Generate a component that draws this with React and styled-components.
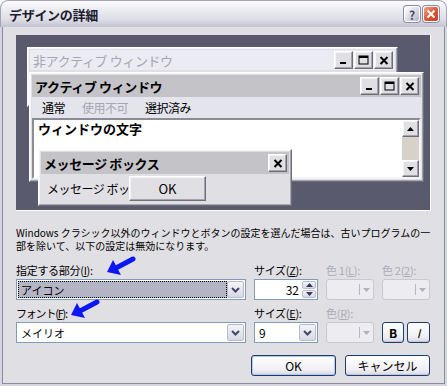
import styled, { createGlobalStyle, css } from "styled-components";

const GlobalStyle = createGlobalStyle`
  html, body {
    margin: 0;
    padding: 0;
    background: #ffffff;
  }
  body {
    font-family: "Noto Sans CJK JP", "Noto Sans", sans-serif;
  }
  * {
    box-sizing: border-box;
  }
`;

const raised = css`
  border: 1px solid;
  border-color: #ffffff #6e6e7a #6e6e7a #ffffff;
  box-shadow: inset -1px -1px #a4a4ae, inset 1px 1px #f4f4f8;
`;

const Window = styled.div`
  width: 447px;
  height: 386px;
  display: flex;
  flex-direction: column;
  background: #d6d6e0;
  border-radius: 8px 8px 0 0;
  padding: 0 2px 2px;
  overflow: hidden;
`;

const TitleBar = styled.div`
  height: 27px;
  margin: 0 -2px;
  display: flex;
  align-items: center;
  gap: 3px;
  padding: 0 7px 0 8px;
  border: 1px solid #a4a4b6;
  border-bottom: none;
  border-radius: 8px 8px 0 0;
  background: linear-gradient(#fdfdfe 0%, #ededf3 30%, #dedee8 70%, #c4c4d2 100%);
`;

const TitleText = styled.div`
  flex: 1;
  font-size: 13px;
  font-weight: 700;
  color: #1c1c2c;
  letter-spacing: -0.3px;
`;

const CapIcon = styled.div`
  width: 16px;
  height: 16px;
  border-radius: 3px;
  border: 1px solid #ffffff;
  box-shadow: 0 0 0 1px #8c8ca2;
  display: flex;
  align-items: center;
  justify-content: center;
  font-size: 12px;
  font-weight: 700;
  color: #4a4a66;
  background: ${(p) =>
    p.$close
      ? "linear-gradient(135deg, #f6a68e, #e06040 45%, #c23a1e)"
      : "linear-gradient(135deg, #ffffff, #dcdce6 50%, #b6b6c8)"};
`;

const Body = styled.div`
  flex: 1;
  background: #e0dfe3;
  border: 1px solid #8b8b9b;
  border-top: none;
  padding: 8px 13px 0;
`;

const Preview = styled.div`
  position: relative;
  height: 176px;
  background: #5a5a6e;
  border-right: 1px solid #ffffff;
  border-bottom: 1px solid #ffffff;
  overflow: hidden;
`;

const PreviewWin = styled.div`
  position: absolute;
  left: ${(p) => p.$left}px;
  top: ${(p) => p.$top}px;
  width: ${(p) => p.$width}px;
  height: ${(p) => p.$height}px;
  background: #e0dfe3;
  padding: 2px;
  display: flex;
  flex-direction: column;
  ${raised}
`;

const Caption = styled.div`
  height: ${(p) => p.$h}px;
  flex-shrink: 0;
  display: flex;
  align-items: center;
  justify-content: space-between;
  padding: 0 2px 0 3px;
  background: ${(p) => (p.$active ? "#c4c4c8" : "#ebebf3")};
  color: ${(p) => (p.$active ? "#000000" : "#a6a6ae")};
  font-size: 13px;
  font-weight: ${(p) => (p.$active ? 700 : 400)};
  letter-spacing: -0.4px;
  white-space: nowrap;
`;

const CapButtons = styled.div`
  display: flex;
  gap: 1px;
`;

const CapButton = styled.div`
  width: 19px;
  height: 18px;
  background: #e0dfe3;
  display: flex;
  align-items: center;
  justify-content: center;
  ${raised}
`;

const MenuBar = styled.div`
  height: 21px;
  flex-shrink: 0;
  display: flex;
  align-items: center;
  gap: 17px;
  padding-left: 10px;
  font-size: 12px;
  letter-spacing: -0.5px;
  background: #e4e4ec;
`;

const MenuItem = styled.span`
  color: ${(p) => (p.$disabled ? "#a6a6ae" : "#000000")};
`;

const TextBox = styled.div`
  flex: 1;
  display: flex;
  background: #ffffff;
  border: 2px solid;
  border-color: #8c8c96 #f4f4f8 #f4f4f8 #8c8c96;
`;

const WinText = styled.div`
  flex: 1;
  padding: 0 4px;
  font-size: 13px;
  font-weight: 700;
  line-height: 18px;
`;

const ScrollBar = styled.div`
  width: 17px;
  display: flex;
  flex-direction: column;
  justify-content: space-between;
  background: #d6d2ca;
`;

const ScrollButton = styled(CapButton)`
  width: 17px;
  height: 17px;
`;

const MsgBody = styled.div`
  flex: 1;
  display: flex;
  align-items: center;
  padding-left: 6px;
  font-size: 12px;
  letter-spacing: -0.5px;
`;

const MsgText = styled.span`
  width: 82px;
  overflow: hidden;
  white-space: nowrap;
`;

const MsgOk = styled(CapButton)`
  width: 77px;
  height: 25px;
  font-size: 13px;
  letter-spacing: 0;
`;

const Note = styled.p`
  margin: 15px 0 0;
  font-size: 10px;
  line-height: 13px;
  white-space: nowrap;
  color: #000000;
`;

const Form = styled.div`
  position: relative;
  margin-top: 11px;
  display: grid;
  grid-template-columns: 230px 64px 48px 48px;
  column-gap: 8px;
  row-gap: 6px;
`;

const Field = styled.div`
  display: flex;
  flex-direction: column;
  gap: 2px;
`;

const Label = styled.div`
  height: 14px;
  font-size: 11px;
  line-height: 14px;
  letter-spacing: ${(p) => (p.$tight ? "-1.2px" : "-0.3px")};
  white-space: nowrap;
  color: ${(p) => (p.$disabled ? "#acacb6" : "#000000")};
`;

const Combo = styled.div`
  height: 21px;
  display: flex;
  background: #ffffff;
  border: 1px solid #7f9db9;
  padding: 1px;
`;

const ComboText = styled.div`
  flex: 1;
  display: flex;
  align-items: center;
  justify-content: ${(p) => (p.$right ? "flex-end" : "flex-start")};
  padding: 0 3px;
  font-size: ${(p) => (p.$num ? "12px" : "11px")};
  ${(p) =>
    p.$selected &&
    css`
      background: #b4b5c4;
      outline: 1px dotted #000000;
      outline-offset: -1px;
    `}
`;

const DropButton = styled.div`
  width: 17px;
  display: flex;
  align-items: center;
  justify-content: center;
  border: 1px solid #b6bccb;
  border-radius: 2px;
  background: linear-gradient(#f4f4f8, #d8d9e4);
`;

const Spin = styled.div`
  width: 14px;
  display: flex;
  flex-direction: column;
  gap: 1px;
`;

const SpinPart = styled(DropButton)`
  width: 14px;
  flex: 1;
`;

const ColorButton = styled.div`
  height: 21px;
  display: flex;
  align-items: center;
  justify-content: flex-end;
  gap: 3px;
  padding-right: 3px;
  border: 1px solid #c8c8d2;
  border-radius: 3px;
  background: #ececf1;
`;

const Separator = styled.span`
  width: 1px;
  height: 11px;
  background: #b8b8c2;
`;

const XpButton = styled.div`
  width: ${(p) => p.$w}px;
  height: 21px;
  display: flex;
  align-items: center;
  justify-content: center;
  border: 1px solid #1c3c6c;
  border-radius: 3px;
  background: linear-gradient(#ffffff, #f0f0f4 70%, #d8d8e6);
  font-size: 12px;
  color: #000000;
  box-shadow: ${(p) =>
    p.$default ? "inset 0 0 0 1px #b6c8ec" : "inset 0 -1px 0 #c6c6d6"};
`;

const StyleButtons = styled.div`
  display: flex;
  gap: 3px;
`;

const Actions = styled.div`
  grid-column: 1 / -1;
  display: flex;
  justify-content: flex-end;
  gap: 9px;
  margin-top: 6px;
`;

const Arrow = styled.svg`
  position: absolute;
  left: ${(p) => p.$left}px;
  top: ${(p) => p.$top}px;
`;

function MinGlyph() {
  return (
    <svg width="9" height="8" viewBox="0 0 9 8">
      <rect x="1" y="6" width="6" height="2" fill="#000" />
    </svg>
  );
}

function MaxGlyph() {
  return (
    <svg width="11" height="10" viewBox="0 0 11 10">
      <rect x="1" y="1" width="9" height="8" fill="none" stroke="#000" strokeWidth="1" />
      <rect x="1" y="1" width="9" height="2" fill="#000" />
    </svg>
  );
}

function CloseGlyph() {
  return (
    <svg width="10" height="9" viewBox="0 0 10 9">
      <path d="M1.5 1 L8.5 8 M8.5 1 L1.5 8" stroke="#000" strokeWidth="2" />
    </svg>
  );
}

function Chevron() {
  return (
    <svg width="9" height="6" viewBox="0 0 9 6">
      <path d="M1 1 L4.5 4.5 L8 1" fill="none" stroke="#3d4a6a" strokeWidth="2" />
    </svg>
  );
}

function Tri({ up, color = "#000" }) {
  return (
    <svg width="7" height="4" viewBox="0 0 7 4">
      <path d={up ? "M0 4 L3.5 0 L7 4 Z" : "M0 0 L3.5 4 L7 0 Z"} fill={color} />
    </svg>
  );
}

function BlueArrow({ left, top }) {
  return (
    <Arrow $left={left} $top={top} width="30" height="22" viewBox="0 0 30 22">
      <path d="M27 3 L10 12" stroke="#0c18f4" strokeWidth="5" strokeLinecap="round" />
      <path d="M1 16 L7 4 L15 19 Z" fill="#0c18f4" />
    </Arrow>
  );
}

function ColorPick() {
  return (
    <ColorButton>
      <Separator />
      <Tri color="#b0b0ba" />
    </ColorButton>
  );
}

export default function App() {
  return (
    <>
      <GlobalStyle />
      <Window>
        <TitleBar>
          <TitleText>デザインの詳細</TitleText>
          <CapIcon>?</CapIcon>
          <CapIcon $close>
            <svg width="10" height="10" viewBox="0 0 10 10">
              <path d="M1.5 1.5 L8.5 8.5 M8.5 1.5 L1.5 8.5" stroke="#fff" strokeWidth="2" />
            </svg>
          </CapIcon>
        </TitleBar>

        <Body>
          <Preview>
            <PreviewWin $left={11} $top={12} $width={371} $height={60}>
              <Caption $h={20}>
                非アクティブ ウィンドウ
                <CapButtons>
                  <CapButton><MinGlyph /></CapButton>
                  <CapButton><MaxGlyph /></CapButton>
                  <CapButton><CloseGlyph /></CapButton>
                </CapButtons>
              </Caption>
            </PreviewWin>

            <PreviewWin $left={13} $top={37} $width={395} $height={110}>
              <Caption $h={22} $active>
                アクティブ ウィンドウ
                <CapButtons>
                  <CapButton><MinGlyph /></CapButton>
                  <CapButton><MaxGlyph /></CapButton>
                  <CapButton><CloseGlyph /></CapButton>
                </CapButtons>
              </Caption>
              <MenuBar>
                <MenuItem>通常</MenuItem>
                <MenuItem $disabled>使用不可</MenuItem>
                <MenuItem>選択済み</MenuItem>
              </MenuBar>
              <TextBox>
                <WinText>ウィンドウの文字</WinText>
                <ScrollBar>
                  <ScrollButton><Tri up /></ScrollButton>
                  <ScrollButton><Tri /></ScrollButton>
                </ScrollBar>
              </TextBox>
            </PreviewWin>

            <PreviewWin $left={22} $top={114} $width={254} $height={57}>
              <Caption $h={22} $active>
                メッセージ ボックス
                <CapButton><CloseGlyph /></CapButton>
              </Caption>
              <MsgBody>
                <MsgText>メッセージ ボックス</MsgText>
                <MsgOk>OK</MsgOk>
              </MsgBody>
            </PreviewWin>
          </Preview>

          <Note>
            Windows クラシック以外のウィンドウとボタンの設定を選んだ場合は、古いプログラムの一<br />
            部を除いて、以下の設定は無効になります。
          </Note>

          <Form>
            <Field>
              <Label>指定する部分(<u>I</u>):</Label>
              <Combo>
                <ComboText $selected>アイコン</ComboText>
                <DropButton><Chevron /></DropButton>
              </Combo>
            </Field>
            <Field>
              <Label>サイズ(<u>Z</u>):</Label>
              <Combo>
                <ComboText $right $num>32</ComboText>
                <Spin>
                  <SpinPart><Tri up color="#2c3a5a" /></SpinPart>
                  <SpinPart><Tri color="#2c3a5a" /></SpinPart>
                </Spin>
              </Combo>
            </Field>
            <Field>
              <Label $disabled>色 1(<u>L</u>):</Label>
              <ColorPick />
            </Field>
            <Field>
              <Label $disabled>色 2(<u>2</u>):</Label>
              <ColorPick />
            </Field>

            <Field>
              <Label $tight>フォント(<u>F</u>):</Label>
              <Combo>
                <ComboText>メイリオ</ComboText>
                <DropButton><Chevron /></DropButton>
              </Combo>
            </Field>
            <Field>
              <Label>サイズ(<u>E</u>):</Label>
              <Combo>
                <ComboText $num>9</ComboText>
                <DropButton><Chevron /></DropButton>
              </Combo>
            </Field>
            <Field>
              <Label $disabled>色(<u>R</u>):</Label>
              <ColorPick />
            </Field>
            <Field>
              <Label />
              <StyleButtons>
                <XpButton $w={22}><b>B</b></XpButton>
                <XpButton $w={23}><i>I</i></XpButton>
              </StyleButtons>
            </Field>

            <Actions>
              <XpButton $w={85} $default>OK</XpButton>
              <XpButton $w={85}>キャンセル</XpButton>
            </Actions>

            <BlueArrow left={90} top={-7} />
            <BlueArrow left={54} top={36} />
          </Form>
        </Body>
      </Window>
    </>
  );
}
